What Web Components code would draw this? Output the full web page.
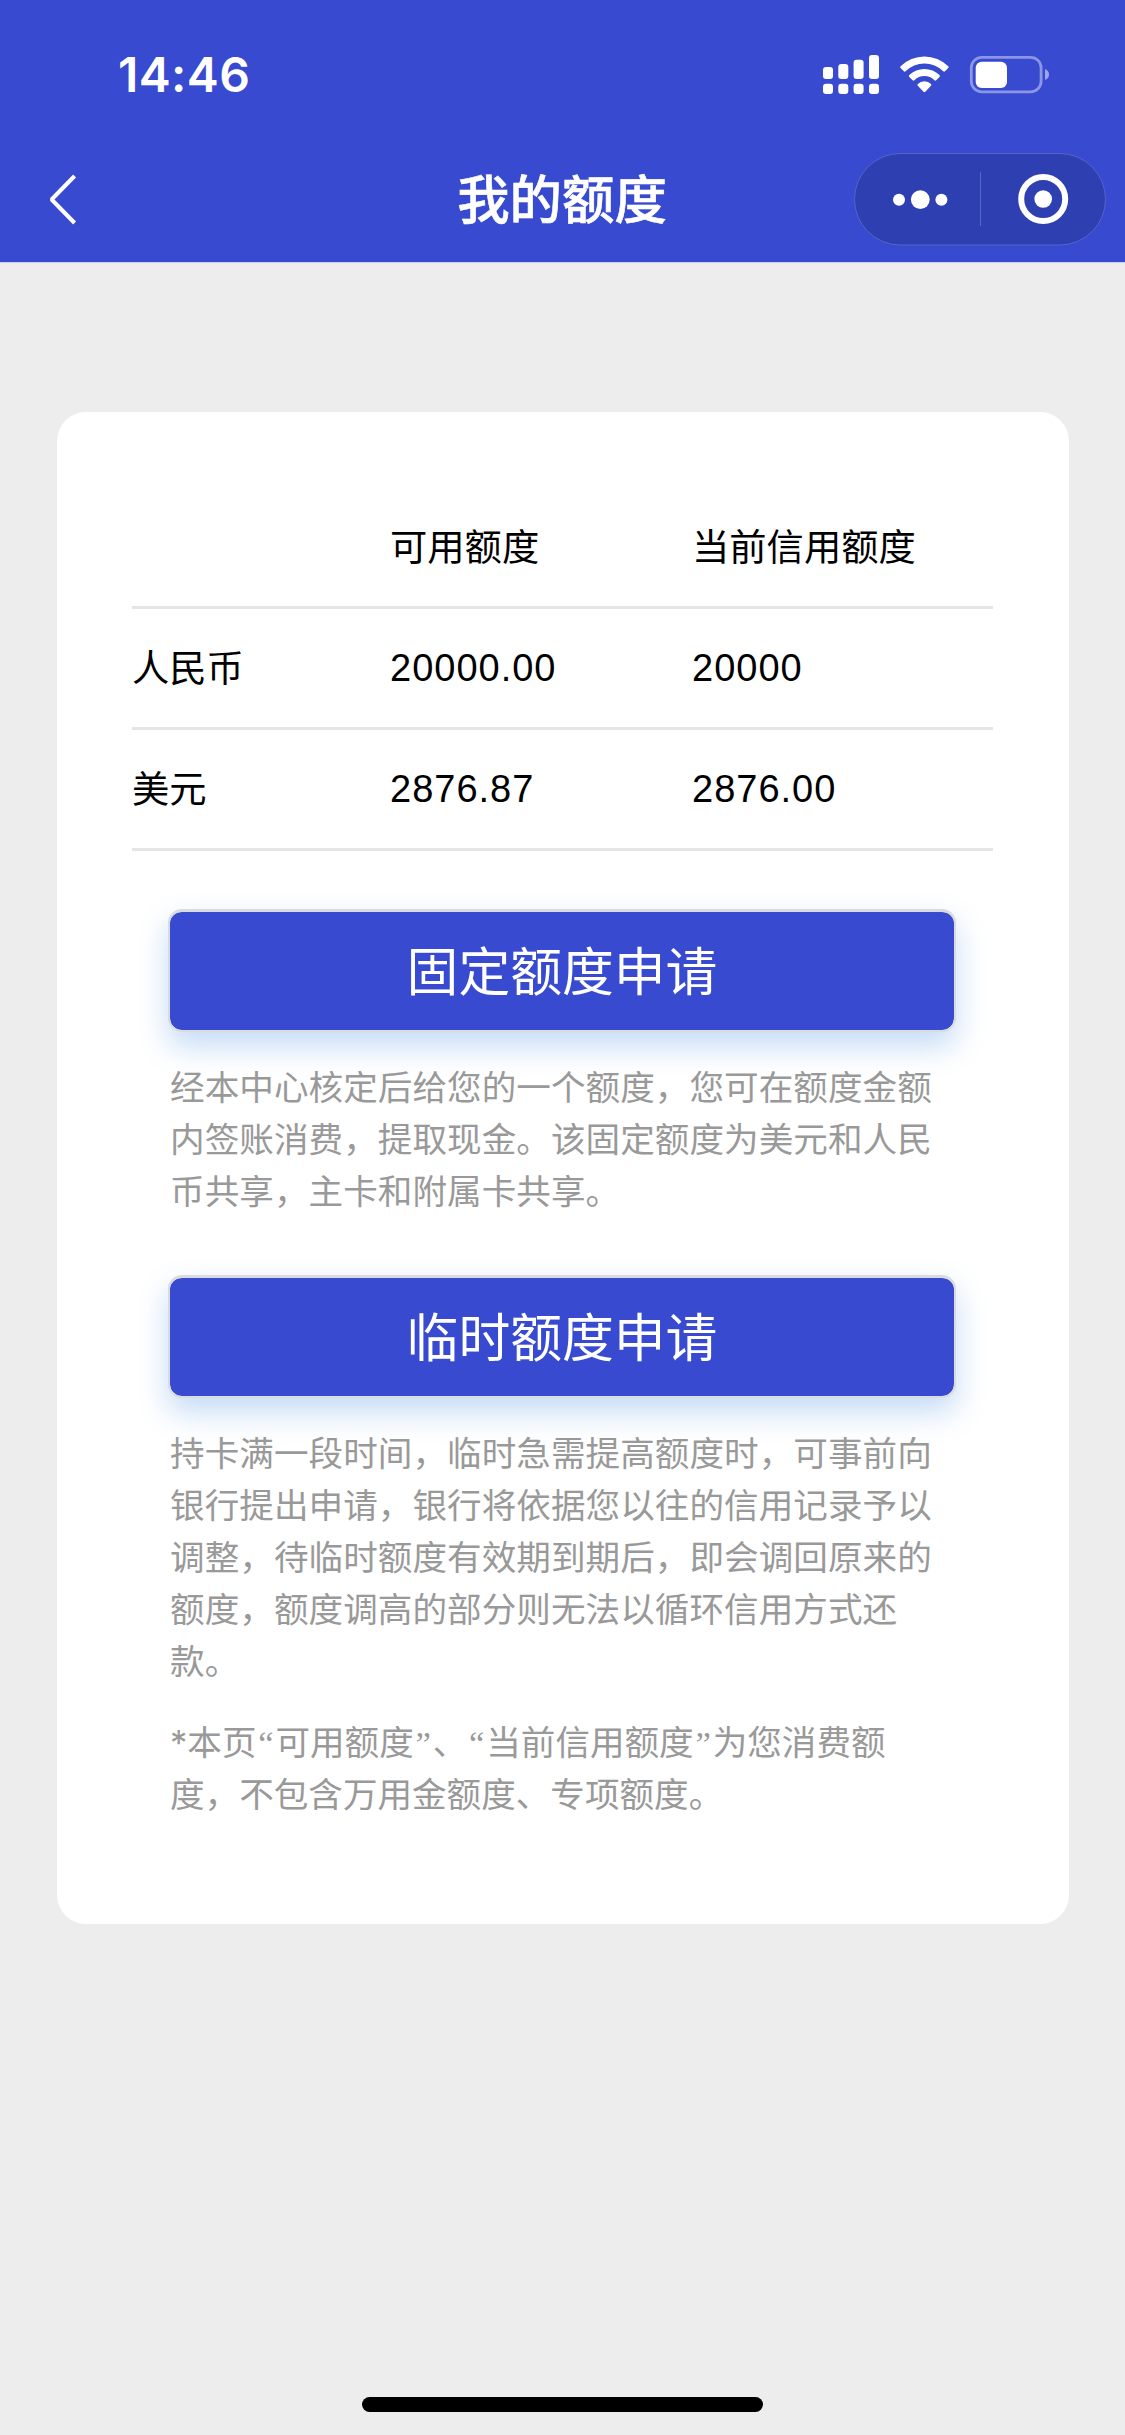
<!DOCTYPE html>
<html lang="zh-CN">
<head>
<meta charset="utf-8">
<title>我的额度</title>
<style>
  html, body { margin: 0; padding: 0; }
  body {
    width: 1125px; height: 2435px; overflow: hidden; background: #ededed;
    font-family: Inter, "Noto Sans CJK SC", sans-serif;
    text-spacing-trim: space-all;
  }
</style>
</head>
<body>
<limit-page>
  <status-bar slot="top" time="14:46"></status-bar>
  <nav-bar slot="top">我的额度</nav-bar>
  <limit-card>
    <limit-table>
      <limit-row><span slot="a">可用额度</span><span slot="b">当前信用额度</span></limit-row>
      <limit-row><span slot="name">人民币</span><span slot="a">20000.00</span><span slot="b">20000</span></limit-row>
      <limit-row><span slot="name">美元</span><span slot="a">2876.87</span><span slot="b">2876.00</span></limit-row>
    </limit-table>
    <limit-action label="固定额度申请">经本中心核定后给您的一个额度，您可在额度金额<br>内签账消费，提取现金。该固定额度为美元和人民<br>币共享，主卡和附属卡共享。</limit-action>
    <limit-action label="临时额度申请">持卡满一段时间，临时急需提高额度时，可事前向<br>银行提出申请，银行将依据您以往的信用记录予以<br>调整，待临时额度有效期到期后，即会调回原来的<br>额度，额度调高的部分则无法以循环信用方式还<br>款。</limit-action>
    <limit-note>*本页<span>“</span>可用额度<span>”</span>、<span>“</span>当前信用额度<span>”</span>为您消费额<br>度，不包含万用金额度、专项额度。</limit-note>
  </limit-card>
  <home-indicator slot="bottom"></home-indicator>
</limit-page>

<script>
const define = (name, html, setup) => customElements.define(name, class extends HTMLElement {
  constructor() {
    super();
    this.attachShadow({ mode: 'open' }).innerHTML = html;
  }
  connectedCallback() { if (setup) setup(this, this.shadowRoot); }
});

define('limit-page', `
<style>
  :host { display: flex; flex-direction: column; width: 1125px; height: 2435px; background: #ededed; }
  header { flex: none; height: 262px; background: #374ad0; border-bottom: 1px solid #c9cdf2; }
  main { flex: 1; padding: 149px 56px 0 57px; }
</style>
<header><slot name="top"></slot></header>
<main><slot></slot></main>
<slot name="bottom"></slot>`);

define('status-bar', `
<style>
  :host { display: flex; align-items: center; justify-content: space-between; box-sizing: border-box; height: 150px; padding: 0 75px 0 118px; color: #fff; }
  span { font-size: 48px; font-weight: 600; line-height: 60px; letter-spacing: .4px; }
  svg { display: block; }
</style>
<span></span>
<svg width="228" height="40" viewBox="822 55 228 40" fill="#fff">
  <rect x="823" y="67" width="10" height="12" rx="3"/><rect x="838.3" y="64" width="10" height="15" rx="3"/>
  <rect x="853.6" y="59.7" width="10" height="19.3" rx="3"/><rect x="869" y="55" width="10" height="24" rx="3"/>
  <rect x="823" y="83.7" width="10" height="10.3" rx="3"/><rect x="838.3" y="83.7" width="10" height="10.3" rx="3"/>
  <rect x="853.6" y="83.7" width="10" height="10.3" rx="3"/><rect x="869" y="83.7" width="10" height="10.3" rx="3"/>
  <path d="M900.6 66.3a33.8 33.8 0 0 1 47.6 0q.9.9 0 1.8l-3.2 3.2q-.9.9-1.8 0a26.8 26.8 0 0 0-37.6 0q-.9.9-1.8 0l-3.2-3.2q-.9-.9 0-1.8z"/>
  <path d="M909.3 75.1a21.7 21.7 0 0 1 30.2 0q.9.9 0 1.8l-3.3 3.3q-.9.9-1.8 0a14.3 14.3 0 0 0-20 0q-.9.9-1.8 0l-3.3-3.3q-.9-.9 0-1.8z"/>
  <path d="M917.8 84a9.4 9.4 0 0 1 13.2 0q.9.9 0 1.8l-5.7 5.9q-.9.9-1.8 0l-5.7-5.9q-.9-.9 0-1.8z"/>
  <rect x="971.3" y="57.3" width="69.8" height="34.5" rx="10.5" fill="none" stroke="#fff" stroke-opacity=".42" stroke-width="2.8"/>
  <rect x="975.7" y="61.7" width="31.3" height="26.3" rx="6"/>
  <path d="M1045 69q4 1.5 4 5.5t-4 5.5z" fill-opacity=".5"/>
</svg>`, (el, root) => { root.querySelector('span').textContent = el.getAttribute('time'); });

define('nav-bar', `
<style>
  :host { display: grid; grid-template-columns: 1fr auto 1fr; align-items: center; height: 98px; padding: 0 19px 0 48px; color: #fff; }
  h1 { margin: 0; padding: 1px 30px 0 0; font-size: 52.4px; font-weight: 500; line-height: 76px; white-space: nowrap; -webkit-text-stroke: .6px #fff; }
  .back { display: block; }
  nav-capsule { justify-self: end; }
</style>
<svg class="back" width="30" height="52" viewBox="0 0 30 52"><path d="M26.6 3L3.6 26.5l23 23.5" fill="none" stroke="#fff" stroke-width="4" stroke-linejoin="bevel"/></svg>
<h1><slot></slot></h1>
<nav-capsule></nav-capsule>`);

define('nav-capsule', `
<style>
  :host { display: block; width: 252px; height: 93px; }
  svg { display: block; }
</style>
<svg width="252" height="93" viewBox="854 153 252 93" fill="#fff">
  <rect x="854.5" y="153.5" width="251" height="91.5" rx="45.75" fill="#2e3fb2" stroke="#5664c6"/>
  <circle cx="899" cy="199.8" r="6"/><circle cx="920.3" cy="199.6" r="9.4"/><circle cx="941.4" cy="199.8" r="6"/>
  <rect x="980" y="172" width="1" height="54" fill="#5a67c4"/>
  <circle cx="1043.2" cy="199" r="22" fill="none" stroke="#fff" stroke-width="6"/><circle cx="1043.2" cy="199" r="8.8"/>
</svg>`);

define('limit-card', `
<style>
  :host { display: flex; flex-direction: column; box-sizing: border-box; height: 1512px; padding: 76px 76px 0 75px; border-radius: 29px; background: #fff; }
</style>
<slot></slot>`);

define('limit-table', `<style>:host { display: block; margin-bottom: 58px; }</style><slot></slot>`);

define('limit-row', `
<style>
  :host { display: grid; grid-template-columns: 258px 302px 1fr; align-items: center; height: 118px; border-bottom: 3px solid #e5e5e5; font-family: "Liberation Sans", "Noto Sans CJK SC", sans-serif; font-size: 37.3px; line-height: 56px; color: #000; }
  div { padding-top: 2px; }
  .num { font-size: 38px; letter-spacing: 1px; padding: 0 0 1px; }
</style>
<div><slot name="name"></slot></div><div class="cell"><slot name="a"></slot></div><div class="cell"><slot name="b"></slot></div>`,
(el, root) => {
  if (el.querySelector('[slot=name]')) root.querySelectorAll('.cell').forEach(c => c.classList.add('num'));
});

define('limit-action', `
<style>
  :host { display: block; margin: 0 37px 0 36px; }
  button {
    display: block; box-sizing: border-box; width: 788px; height: 123px; margin: 0 0 30px; padding: 0;
    border: 2px solid #dadbdc; border-top-width: 3px; border-radius: 14px; background: #374ad0; background-clip: padding-box;
    box-shadow: 0 14px 30px rgba(60, 135, 225, .3);
    color: #fff; font: inherit; font-size: 51.8px; text-align: center;
  }
  button span { display: block; padding-top: 2px; line-height: 116px; }
  p { margin: 0 0 57.3px 2px; font-size: 34.6px; letter-spacing: .05px; line-height: 51.9px; color: #999; white-space: nowrap; }
</style>
<button type="button"><span></span></button>
<p><slot></slot></p>`, (el, root) => { root.querySelector('button span').textContent = el.getAttribute('label'); });

define('limit-note', `
<style>
  :host { display: block; margin: -28px 0 0 38px; font-size: 34.6px; line-height: 51.9px; color: #999; white-space: nowrap; }
  ::slotted(span) { font-family: "Liberation Serif", serif; line-height: 1; padding: 0 1.8px; }
</style>
<slot></slot>`);

define('home-indicator', `
<style>
  :host { display: flex; justify-content: center; height: 38px; }
  div { width: 401px; height: 15px; border-radius: 8px; background: #000; }
</style>
<div></div>`);
</script>
</body>
</html>
